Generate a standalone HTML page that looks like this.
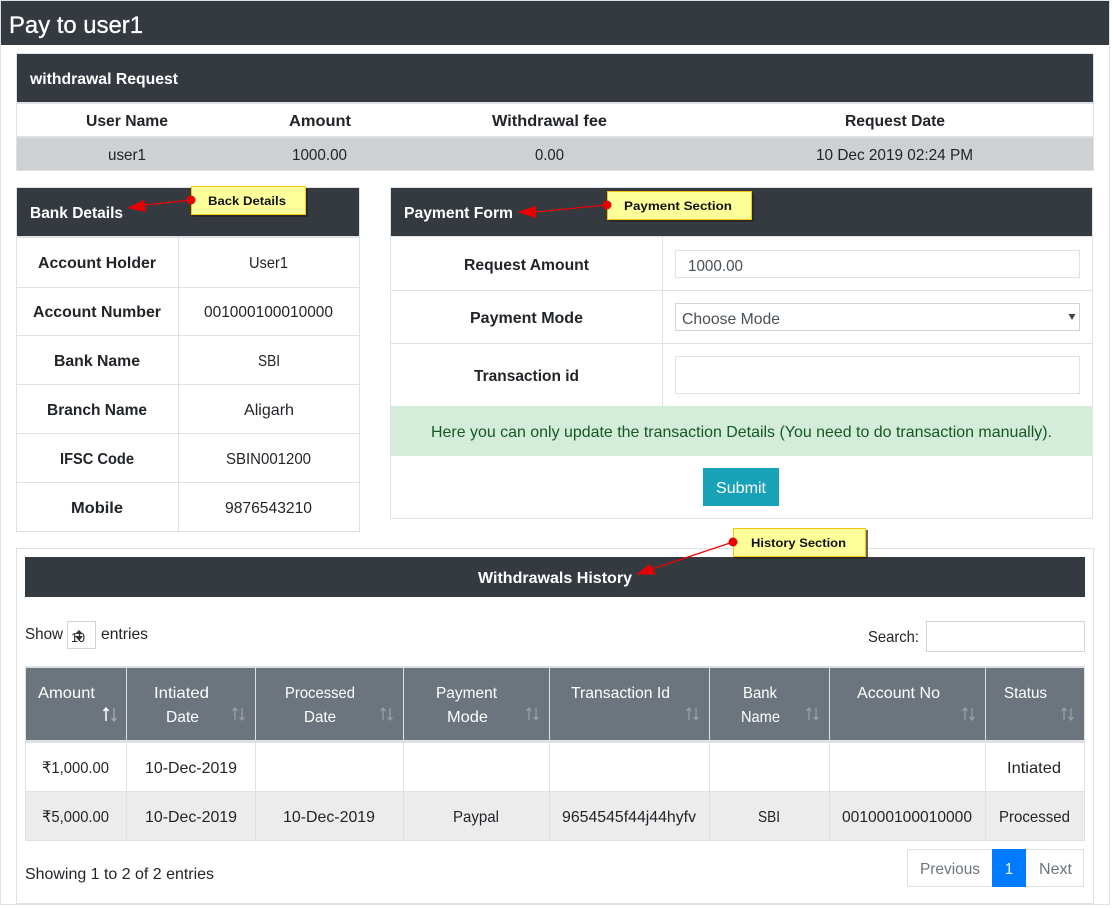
<!DOCTYPE html>
<html><head><meta charset="utf-8"><title>Pay to user1</title>
<style>
html,body{margin:0;padding:0;background:#fff;width:1113px;height:908px;overflow:hidden}
svg{display:block}
text{font-family:"Liberation Sans",sans-serif;font-size:16px;fill:#212529}
.b{font-weight:700}
.w{fill:#fff}
.c{font-size:12px;font-weight:700;fill:#111}
</style></head><body>
<svg width="1113" height="908" viewBox="0 0 1113 908" xmlns="http://www.w3.org/2000/svg">
<g shape-rendering="crispEdges">
<!-- frame -->
<rect x="0" y="0" width="1110" height="1" fill="#dee2e6"/>
<rect x="0" y="0" width="1" height="905" fill="#dee2e6"/>
<rect x="1109" y="0" width="1" height="905" fill="#dee2e6"/>
<rect x="0" y="904" width="1110" height="1" fill="#dee2e6"/>
<rect x="1" y="1" width="1108" height="44" fill="#353a41"/>

<!-- request panel -->
<rect x="16.5" y="53.5" width="1077" height="117" fill="#fff" stroke="#dee2e6"/>
<rect x="17" y="54" width="1076" height="48" fill="#353a41"/>
<rect x="17" y="102" width="1076" height="2" fill="#dee2e6"/>
<rect x="17" y="136" width="1076" height="2" fill="#dee2e6"/>
<rect x="17" y="138" width="1076" height="32" fill="#ced0d2"/>

<!-- bank panel -->
<rect x="16.5" y="187.5" width="343" height="344" fill="#fff" stroke="#dee2e6"/>
<rect x="17" y="188" width="342" height="48" fill="#353a41"/>
<rect x="17" y="236" width="342" height="2" fill="#dee2e6"/>
<rect x="178" y="238" width="1" height="293" fill="#dee2e6"/>
<rect x="17" y="287" width="342" height="1" fill="#dee2e6"/>
<rect x="17" y="335" width="342" height="1" fill="#dee2e6"/>
<rect x="17" y="384" width="342" height="1" fill="#dee2e6"/>
<rect x="17" y="433" width="342" height="1" fill="#dee2e6"/>
<rect x="17" y="482" width="342" height="1" fill="#dee2e6"/>

<!-- payment panel -->
<rect x="390.5" y="187.5" width="702" height="331" fill="#fff" stroke="#dee2e6"/>
<rect x="391" y="188" width="701" height="48" fill="#353a41"/>
<rect x="391" y="236" width="701" height="1" fill="#dee2e6"/>
<rect x="662" y="237" width="1" height="169" fill="#dee2e6"/>
<rect x="391" y="290" width="701" height="1" fill="#dee2e6"/>
<rect x="391" y="343" width="701" height="1" fill="#dee2e6"/>
<rect x="675.5" y="250.5" width="404" height="27" fill="#fff" stroke="#dfe2e6"/>
<rect x="675.5" y="303.5" width="404" height="27" fill="#fff" stroke="#ced4da"/>
<rect x="675.5" y="356.5" width="404" height="37" fill="#fff" stroke="#dfe2e6"/>
<rect x="391" y="406" width="701" height="50" fill="#d4edda"/>
<rect x="703" y="468" width="76" height="38" fill="#17a2b8"/>

<!-- history panel -->
<rect x="16.5" y="548.5" width="1077" height="355" fill="#fff" stroke="#dee2e6"/>
<rect x="25" y="557" width="1060" height="40" fill="#353a41"/>
<rect x="67.5" y="621.5" width="28" height="27" fill="#fff" stroke="#ced4da"/>
<rect x="926.5" y="621.5" width="158" height="30" fill="#fff" stroke="#ced4da"/>

<!-- table -->
<rect x="25" y="666" width="1060" height="175" fill="#dee2e6"/>
<rect x="26" y="668" width="1058" height="72" fill="#6c757d"/>
<rect x="26" y="743" width="1058" height="48" fill="#fff"/>
<rect x="26" y="792" width="1058" height="48" fill="#ececec"/>
<g fill="#dee2e6">
<rect x="126" y="668" width="1" height="172"/>
<rect x="255" y="668" width="1" height="172"/>
<rect x="403" y="668" width="1" height="172"/>
<rect x="549" y="668" width="1" height="172"/>
<rect x="709" y="668" width="1" height="172"/>
<rect x="829" y="668" width="1" height="172"/>
<rect x="985" y="668" width="1" height="172"/>
</g>

<!-- pagination -->
<rect x="907.5" y="849.5" width="176" height="37" fill="#fff" stroke="#dee2e6"/>
<rect x="992" y="849" width="34" height="38" fill="#007bff"/>
</g>

<!-- text -->
<text x="9" y="33" class="w" style="font-size:24px;stroke:#fff;stroke-width:.3" textLength="134" lengthAdjust="spacingAndGlyphs">Pay to user1</text>
<text x="30" y="84" class="b w" textLength="148" lengthAdjust="spacingAndGlyphs">withdrawal Request</text>
<text x="86" y="126" class="b" textLength="82" lengthAdjust="spacingAndGlyphs">User Name</text>
<text x="289" y="126" class="b" textLength="62" lengthAdjust="spacingAndGlyphs">Amount</text>
<text x="492" y="126" class="b" textLength="115" lengthAdjust="spacingAndGlyphs">Withdrawal fee</text>
<text x="845" y="126" class="b" textLength="100" lengthAdjust="spacingAndGlyphs">Request Date</text>
<text x="108" y="160" textLength="38" lengthAdjust="spacingAndGlyphs">user1</text>
<text x="292" y="160" textLength="55" lengthAdjust="spacingAndGlyphs">1000.00</text>
<text x="535" y="160" textLength="29" lengthAdjust="spacingAndGlyphs">0.00</text>
<text x="816" y="160" textLength="157" lengthAdjust="spacingAndGlyphs">10 Dec 2019 02:24 PM</text>

<text x="30" y="218" class="b w" textLength="93" lengthAdjust="spacingAndGlyphs">Bank Details</text>
<text x="38" y="268" class="b" textLength="118" lengthAdjust="spacingAndGlyphs">Account Holder</text>
<text x="33" y="317" class="b" textLength="128" lengthAdjust="spacingAndGlyphs">Account Number</text>
<text x="54" y="366" class="b" textLength="86" lengthAdjust="spacingAndGlyphs">Bank Name</text>
<text x="47" y="415" class="b" textLength="100" lengthAdjust="spacingAndGlyphs">Branch Name</text>
<text x="60" y="464" class="b" textLength="74" lengthAdjust="spacingAndGlyphs">IFSC Code</text>
<text x="71" y="513" class="b" textLength="52" lengthAdjust="spacingAndGlyphs">Mobile</text>
<text x="249" y="268" textLength="39" lengthAdjust="spacingAndGlyphs">User1</text>
<text x="204" y="317" textLength="129" lengthAdjust="spacingAndGlyphs">001000100010000</text>
<text x="258" y="366" textLength="22" lengthAdjust="spacingAndGlyphs">SBI</text>
<text x="244" y="415" textLength="50" lengthAdjust="spacingAndGlyphs">Aligarh</text>
<text x="226" y="464" textLength="85" lengthAdjust="spacingAndGlyphs">SBIN001200</text>
<text x="225" y="513" textLength="87" lengthAdjust="spacingAndGlyphs">9876543210</text>

<text x="404" y="218" class="b w" textLength="109" lengthAdjust="spacingAndGlyphs">Payment Form</text>
<text x="464" y="270" class="b" textLength="125" lengthAdjust="spacingAndGlyphs">Request Amount</text>
<text x="470" y="323" class="b" textLength="113" lengthAdjust="spacingAndGlyphs">Payment Mode</text>
<text x="474" y="381" class="b" textLength="105" lengthAdjust="spacingAndGlyphs">Transaction id</text>
<text x="688" y="271" style="fill:#495057" textLength="55" lengthAdjust="spacingAndGlyphs">1000.00</text>
<text x="682" y="324" style="fill:#495057" textLength="98" lengthAdjust="spacingAndGlyphs">Choose Mode</text>
<path d="M1068.500 314h7l-3.500 6z" fill="#444"/>
<text x="431" y="437" style="fill:#155724" textLength="621" lengthAdjust="spacingAndGlyphs">Here you can only update the transaction Details (You need to do transaction manually).</text>
<text x="716" y="493" class="w" textLength="50" lengthAdjust="spacingAndGlyphs">Submit</text>

<text x="478" y="583" class="b w" textLength="154" lengthAdjust="spacingAndGlyphs">Withdrawals History</text>
<text x="25" y="639" textLength="38" lengthAdjust="spacingAndGlyphs">Show</text>
<text x="71" y="642" style="font-size:13px" textLength="14" lengthAdjust="spacingAndGlyphs">10</text>
<path d="M75 634l4-4 4 4zM75 636h8l-4 5z" fill="#333"/>
<text x="101" y="639" textLength="47" lengthAdjust="spacingAndGlyphs">entries</text>
<text x="868" y="642" textLength="51" lengthAdjust="spacingAndGlyphs">Search:</text>

<text x="38" y="698" class="w" textLength="57" lengthAdjust="spacingAndGlyphs">Amount</text>
<text x="154" y="698" class="w" textLength="55" lengthAdjust="spacingAndGlyphs">Intiated</text>
<text x="166" y="722" class="w" textLength="33" lengthAdjust="spacingAndGlyphs">Date</text>
<text x="285" y="698" class="w" textLength="70" lengthAdjust="spacingAndGlyphs">Processed</text>
<text x="304" y="722" class="w" textLength="32" lengthAdjust="spacingAndGlyphs">Date</text>
<text x="436" y="698" class="w" textLength="61" lengthAdjust="spacingAndGlyphs">Payment</text>
<text x="447" y="722" class="w" textLength="41" lengthAdjust="spacingAndGlyphs">Mode</text>
<text x="571" y="698" class="w" textLength="99" lengthAdjust="spacingAndGlyphs">Transaction Id</text>
<text x="743" y="698" class="w" textLength="34" lengthAdjust="spacingAndGlyphs">Bank</text>
<text x="741" y="722" class="w" textLength="39" lengthAdjust="spacingAndGlyphs">Name</text>
<text x="857" y="698" class="w" textLength="83" lengthAdjust="spacingAndGlyphs">Account No</text>
<text x="1004" y="698" class="w" textLength="43" lengthAdjust="spacingAndGlyphs">Status</text>

<!-- sort icons -->
<defs>
<g id="s"><path d="M4 2v12M1.500 5L4 2l2.500 3" fill="none" stroke="#fff" stroke-width="1.300"/><path d="M11 2v12M8.500 11l2.500 3 2.500-3" fill="none" stroke="#fff" stroke-width="1.300"/></g>
</defs>
<path d="M106 708v13M103.500 711l2.500-3 2.500 3" fill="none" stroke="#fff" stroke-width="1.500"/>
<path d="M114 708v13M111.500 718l2.500 3 2.500-3" fill="none" stroke="#a5abb0" stroke-width="1.300"/>
<g opacity=".3">
<use href="#s" x="231" y="706"/>
<use href="#s" x="379" y="706"/>
<use href="#s" x="525" y="706"/>
<use href="#s" x="685" y="706"/>
<use href="#s" x="805" y="706"/>
<use href="#s" x="961" y="706"/>
<use href="#s" x="1060" y="706"/>
</g>

<text x="42" y="773" textLength="67" lengthAdjust="spacingAndGlyphs">₹1,000.00</text>
<text x="145" y="773" textLength="92" lengthAdjust="spacingAndGlyphs">10-Dec-2019</text>
<text x="1007" y="773" textLength="54" lengthAdjust="spacingAndGlyphs">Intiated</text>
<text x="42" y="822" textLength="67" lengthAdjust="spacingAndGlyphs">₹5,000.00</text>
<text x="145" y="822" textLength="92" lengthAdjust="spacingAndGlyphs">10-Dec-2019</text>
<text x="283" y="822" textLength="92" lengthAdjust="spacingAndGlyphs">10-Dec-2019</text>
<text x="453" y="822" textLength="46" lengthAdjust="spacingAndGlyphs">Paypal</text>
<text x="562" y="822" textLength="134" lengthAdjust="spacingAndGlyphs">9654545f44j44hyfv</text>
<text x="758" y="822" textLength="22" lengthAdjust="spacingAndGlyphs">SBI</text>
<text x="842" y="822" textLength="130" lengthAdjust="spacingAndGlyphs">001000100010000</text>
<text x="999" y="822" textLength="71" lengthAdjust="spacingAndGlyphs">Processed</text>
<text x="25" y="879" textLength="189" lengthAdjust="spacingAndGlyphs">Showing 1 to 2 of 2 entries</text>
<text x="920" y="874" style="fill:#6c757d" textLength="60" lengthAdjust="spacingAndGlyphs">Previous</text>
<text x="1005" y="874" class="w" textLength="8" lengthAdjust="spacingAndGlyphs">1</text>
<text x="1039" y="874" style="fill:#6c757d" textLength="33" lengthAdjust="spacingAndGlyphs">Next</text>

<!-- callouts -->
<g>
<rect x="193" y="188" width="115" height="29" fill="#222" opacity=".7"/>
<rect x="191.500" y="186.500" width="114" height="28" fill="#ffff99" stroke="#f3c512"/>
<path d="M191 200L145 205" stroke="#e00" stroke-width="1.200"/>
<path d="M127 208L144 200L146 212z" fill="#e60000"/>
<circle cx="191" cy="200" r="4.500" fill="#e60000"/>
<text x="208" y="205" class="c" textLength="78" lengthAdjust="spacingAndGlyphs">Back Details</text>

<rect x="609" y="193" width="145" height="29" fill="#222" opacity=".7"/>
<rect x="607.500" y="191.500" width="144" height="28" fill="#ffff99" stroke="#f3c512"/>
<path d="M607 205L535 212" stroke="#e00" stroke-width="1.200"/>
<path d="M517 212L536 206L536 218z" fill="#e60000"/>
<circle cx="607" cy="205" r="4.500" fill="#e60000"/>
<text x="624" y="210" class="c" textLength="108" lengthAdjust="spacingAndGlyphs">Payment Section</text>

<rect x="735" y="530" width="133" height="29" fill="#222" opacity=".7"/>
<rect x="733.500" y="528.500" width="132" height="28" fill="#ffff99" stroke="#f3c512"/>
<path d="M733 542L652 569" stroke="#e00" stroke-width="1.200"/>
<path d="M636 574.500L650 564L656 574.500z" fill="#e60000"/>
<circle cx="733" cy="542" r="4.500" fill="#e60000"/>
<text x="751" y="547" class="c" textLength="95" lengthAdjust="spacingAndGlyphs">History Section</text>
</g>
</svg>
</body></html>
